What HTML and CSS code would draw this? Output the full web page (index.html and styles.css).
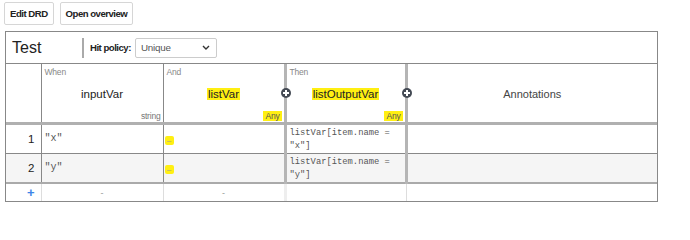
FILE: index.html
```html
<!DOCTYPE html>
<html>
<head>
<meta charset="utf-8">
<link rel="stylesheet" href="styles.css">
</head>
<body>
<div class="toolbar">
  <button class="btn">Edit DRD</button>
  <button class="btn">Open overview</button>
</div>
<div class="dmn">
  <div class="titlebar">
    <div class="name">Test</div>
    <div class="sep"></div>
    <div class="hp-label">Hit policy:</div>
    <div class="select"><span>Unique</span>
      <svg class="chev" width="8" height="5" viewBox="0 0 8 5"><path d="M1 1l3 3 3-3" fill="none" stroke="#333" stroke-width="1.4"/></svg>
    </div>
  </div>
  <table class="grid">
    <colgroup>
      <col class="c-idx"><col class="c-in"><col class="c-in2"><col class="c-out"><col class="c-ann">
    </colgroup>
    <thead>
      <tr class="head">
        <th class="idx"></th>
        <th class="in"><span class="lbl">When</span><span class="var">inputVar</span><span class="type">string</span></th>
        <th class="in last-in"><span class="lbl">And</span><span class="var"><mark>listVar</mark></span><span class="type"><mark>Any</mark></span><span class="add add-r"></span></th>
        <th class="out"><span class="lbl">Then</span><span class="var"><mark>listOutputVar</mark></span><span class="type"><mark>Any</mark></span><span class="add add-r"></span></th>
        <th class="ann"><span class="var">Annotations</span></th>
      </tr>
    </thead>
    <tbody>
      <tr class="rule">
        <td class="idx">1</td>
        <td class="in code">"x"</td>
        <td class="in last-in"><mark class="dash">–</mark></td>
        <td class="out code">listVar[item.name = "x"]</td>
        <td class="ann"></td>
      </tr>
      <tr class="rule alt last-rule">
        <td class="idx">2</td>
        <td class="in code">"y"</td>
        <td class="in last-in"><mark class="dash">–</mark></td>
        <td class="out code">listVar[item.name = "y"]</td>
        <td class="ann"></td>
      </tr>
      <tr class="new">
        <td class="idx plus">+</td>
        <td class="in">-</td>
        <td class="in last-in">-</td>
        <td class="out"></td>
        <td class="ann"></td>
      </tr>
    </tbody>
  </table>
</div>
</body>
</html>
```

FILE: styles.css
```css
* { box-sizing: border-box; }
body {
  margin: 0;
  padding: 2px 5px;
  font-family: "Liberation Sans", Arial, sans-serif;
  color: #222;
  background: #fff;
}
.toolbar {
  display: flex;
  gap: 6px;
  margin-left: -1px;
}
.btn {
  height: 23px;
  padding: 0 5px;
  border: 1px solid #d6d6d6;
  border-radius: 2px;
  background: #fff;
  font-family: "Liberation Sans", Arial, sans-serif;
  font-weight: 700;
  font-size: 9.6px;
  letter-spacing: -0.5px;
  color: #222;
}
.dmn {
  margin-top: 6px;
  width: 653px;
  border: 1px solid #888;
}
.titlebar {
  display: flex;
  align-items: center;
  height: 32px;
  border-bottom: 1px solid #888;
  padding-left: 6px;
}
.name {
  font-size: 16px;
  width: 70px;
  color: #222;
}
.sep {
  width: 2px;
  height: 20px;
  background: #aaa;
  margin-right: 6px;
}
.hp-label {
  font-family: "Liberation Sans", Arial, sans-serif;
  font-weight: 700;
  font-size: 9.6px;
  letter-spacing: -0.5px;
  margin-right: 4px;
}
.select {
  width: 82px;
  height: 20px;
  border: 1px solid #ccc;
  border-radius: 2px;
  display: flex;
  align-items: center;
  justify-content: space-between;
  padding: 0 6px 0 5px;
  font-family: "Liberation Sans", Arial, sans-serif;
  font-size: 9.8px;
  letter-spacing: -0.2px;
  color: #555;
}
.grid {
  width: 651px;
  border-collapse: collapse;
  table-layout: fixed;
}
.c-idx { width: 35px; }
.c-in { width: 122px; }
.c-in2 { width: 122px; }
.c-out { width: 121px; }
.c-ann { width: 251px; }
th, td { padding: 0; }
.grid th, .grid td {
  border-left: 1px solid #888;
}
.grid .idx { border-left: none; }
.grid .out, .grid .ann { border-left: 3px solid #b5b5b5; }
.head th {
  height: 59px;
  position: relative;
  font-weight: 400;
  border-bottom: 3px solid #b0b0b0;
  vertical-align: middle;
  text-align: center;
}
.lbl {
  position: absolute;
  left: 3px;
  top: 3px;
  font-family: "Liberation Sans", Arial, sans-serif;
  font-size: 8.5px;
  letter-spacing: -0.2px;
  color: #888;
}
.var {
  font-size: 11.5px;
  color: #222;
}
.ann .var { font-size: 11px; color: #444; }
.type {
  position: absolute;
  right: 2px;
  bottom: 1px;
  font-family: "Liberation Sans", Arial, sans-serif;
  font-size: 8.5px;
  letter-spacing: -0.2px;
  color: #777;
}
mark {
  background: #ffef12;
  color: #222;
  padding: 0 1px;
}
.type mark { color: #555; padding: 0 2px; }
.add {
  position: absolute;
  top: 24px;
  width: 10px;
  height: 10px;
  border-radius: 50%;
  background: #444a54;
  z-index: 2;
}
.add::before, .add::after {
  content: "";
  position: absolute;
  background: #fff;
}
.add::before { left: 2px; top: 4px; width: 6px; height: 2px; }
.add::after { left: 4px; top: 2px; width: 2px; height: 6px; }
.add-r { right: -7px; }
.rule td {
  height: 30px;
  border-bottom: 1px solid #888;
  vertical-align: middle;
  font-size: 11px;
}
.rule.last-rule td { border-bottom: 2px solid #aaa; }
.rule.alt td { background: #f5f5f5; }
.rule .idx {
  text-align: right;
  padding-right: 6px;
  font-size: 11.5px;
  color: #222;
  background: #fff;
}
.rule td.code {
  font-family: "Liberation Mono", monospace;
  font-size: 8.8px;
  color: #555;
  padding-left: 3px;
  padding-top: 2px;
  line-height: 13px;
}
.rule td.in.code { font-size: 10px; padding-top: 0; }
.rule td.out.code { padding-right: 4px; }
.dash {
  display: inline-block;
  width: 9px;
  height: 9px;
  line-height: 9px;
  font-size: 8px;
  color: #999;
  padding: 0;
  border-radius: 2px;
  text-align: center;
  margin-left: 1px;
}
.new td {
  height: 18px;
  text-align: center;
  font-size: 9px;
  color: #999;
  border-left-color: #ddd;
}
.new .out, .new .ann { border-left: 3px solid #eee; }
.new .ann { border-left-color: #ddd; border-left-width: 1px; }
.new .idx.plus {
  text-align: right;
  padding-right: 6px;
  color: #3c85e8;
  font-size: 13px;
  font-weight: 700;
}
```
